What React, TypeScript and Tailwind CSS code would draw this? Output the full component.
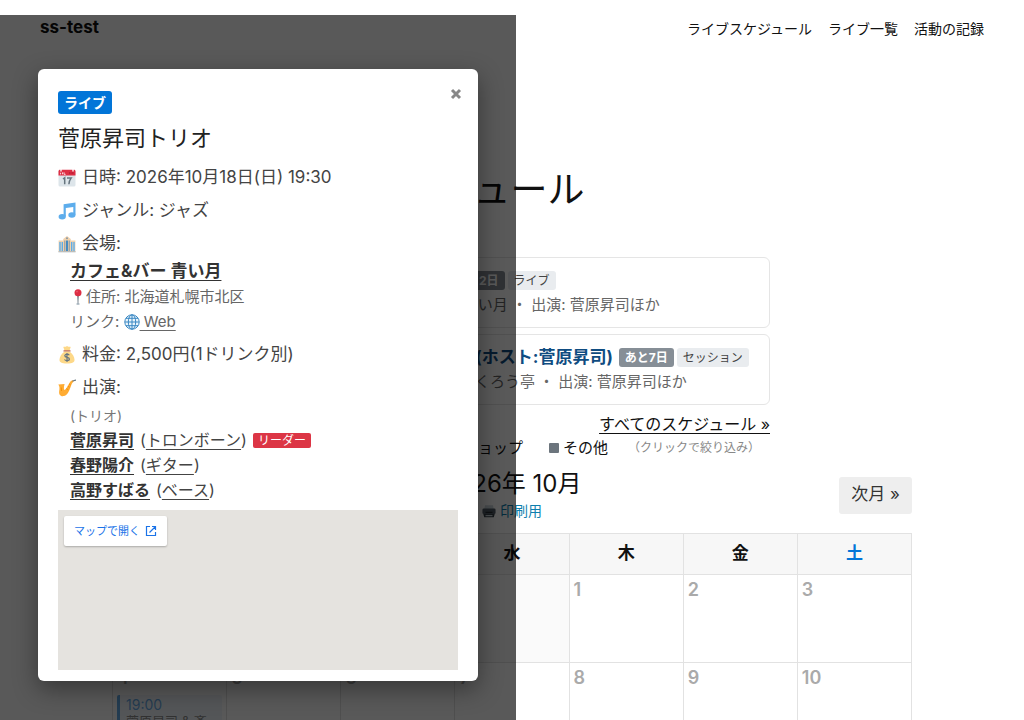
import type { ReactNode } from 'react';

function CalendarIcon() {
  return (
    <svg viewBox="0 0 18 18" className="size-[18px] shrink-0" aria-hidden="true">
      <rect x="0.5" y="1" width="17" height="16.5" rx="1.6" fill="#dde5ea" />
      <path d="M.5 6.6V2.4C.5 1.4 1.2.8 2 .8h14c.9 0 1.5.7 1.5 1.600v4.200z" fill="#dd2e44" />
      <path d="M3 0.300v1.800M15 0.300v1.800" stroke="#fff" strokeWidth="1.300" strokeLinecap="round" />
      <path d="M2.600 5V3.700M2 5.200h.6M4.500 5.300V3.400M6 5.300h1.600M6 3.300v2" stroke="#fff" strokeWidth=".8" />
      <path d="M11 4h5" stroke="#a0152b" strokeWidth="1.200" strokeDasharray="1 .6" />
      <path d="M5 10l1.700-1.300v6.600M9 8.900h4.200c-1.500 2-2.200 4-2.300 6.400" fill="none" stroke="#66757f" strokeWidth="1.500" />
    </svg>
  );
}

function MusicIcon() {
  return (
    <svg viewBox="0 0 18 18" className="size-[18px] shrink-0" aria-hidden="true">
      <path d="M5.600 2.200 17.500.5v12.300h-2.200V5L7.800 6.100v8.400H5.600z" fill="#5dadec" />
      <ellipse cx="4.200" cy="14.700" rx="3.600" ry="2.700" fill="#5dadec" />
      <ellipse cx="13.900" cy="13" rx="3.600" ry="2.700" fill="#5dadec" />
    </svg>
  );
}

function VenueIcon() {
  return (
    <svg viewBox="0 0 18 18" className="size-[18px] shrink-0" aria-hidden="true">
      <path d="M.6 5.500h4.600V4L9 1l3.800 3v1.500h4.600V17H.6z" fill="#f0d2ae" />
      <path d="M2 7v9M4.300 7v9M13.700 7v9M16 7v9" stroke="#55acee" strokeWidth="1.300" />
      <path d="M6.800 5.500V16M11.200 5.500V16" stroke="#8899a6" strokeWidth="1.100" />
      <path d="M9 5.500V16" stroke="#3b88c3" strokeWidth="1.900" />
      <circle cx="9" cy="3.300" r="1" fill="#8899a6" />
      <path d="M.4 16.800h17.200" stroke="#aab4bb" strokeWidth="1" />
    </svg>
  );
}

function MoneyIcon() {
  return (
    <svg viewBox="0 0 18 18" className="size-[18px] shrink-0" aria-hidden="true">
      <path d="M6.500 5.500h5c3.300 2.500 5 5.600 5 8.200 0 2.600-1.800 3.800-7.500 3.800s-7.500-1.200-7.500-3.800c0-2.600 1.700-5.700 5-8.200z" fill="#fdd888" />
      <path d="M5.300 1c1-.8 1.800.2 2.500-.3.800-.5 1.800-.5 2.500 0 .8.500 1.600-.5 2.400.3L11.500 4.500h-5z" fill="#fdd888" />
      <path d="M6 4.900h6" stroke="#bf6952" strokeWidth="1.400" strokeLinecap="round" />
      <path d="M11.300 9.200C10.900 8.500 10 8.200 9 8.200c-1.200 0-2.200.6-2.200 1.600 0 2.300 4.600 1 4.600 3.300 0 1-1.100 1.600-2.400 1.600-1.100 0-2-.4-2.500-1.200M9 7v9" fill="none" stroke="#67757f" strokeWidth="1.200" />
    </svg>
  );
}

function SaxIcon() {
  return (
    <svg viewBox="0 0 18 18" className="size-[18px] shrink-0" aria-hidden="true">
      <path d="M.3 5.500 6.600 4.900C6 6.500 5.800 8 5.900 9.800c0 1.400 1 1.500 1.900.3 1.400-1.800 2.600-4.300 3.800-6.300.9-1.600 2-2.700 3.700-2.500l.3 1.500c-1.500.6-1.900 2.400-2.800 4.700-1.600 4.300-3.300 9-7.200 9.600-3.500.5-4.900-2.100-4.400-5.200.4-2.300.6-4.500-.9-6.400z" fill="#ffac33" />
      <path d="M14.800 2 17.600 1.200" stroke="#66757f" strokeWidth="1.200" strokeLinecap="round" />
      <path d="M8.300 9.700l2 1M9.800 7.300l1.700.9M11.100 5l1.400.8M3.300 8.500l.2 3.500" stroke="#f4900c" strokeWidth="1" />
    </svg>
  );
}

function PinIcon() {
  return (
    <svg viewBox="0 0 16 16" className="size-4 shrink-0" aria-hidden="true">
      <path d="M7.200 6h1.600L8.300 15h-.6z" fill="#66757f" />
      <ellipse cx="8" cy="15" rx="1.800" ry=".7" fill="#99aab5" />
      <circle cx="8" cy="3.700" r="3.500" fill="#dd2e44" />
      <circle cx="7" cy="2.600" r=".9" fill="#ea596e" />
    </svg>
  );
}

function GlobeIcon() {
  return (
    <svg viewBox="0 0 16 16" className="inline-block size-4 align-[-3px]" aria-hidden="true">
      <circle cx="8" cy="8" r="7.200" fill="#e8f4fc" />
      <g fill="none" stroke="#3b88c3" strokeWidth="1">
        <circle cx="8" cy="8" r="7.200" />
        <ellipse cx="8" cy="8" rx="3.700" ry="7.200" />
        <path d="M8 .8v14.400M.8 8h14.400M1.900 4.300h12.200M1.900 11.700h12.200" />
      </g>
    </svg>
  );
}

function PrinterIcon() {
  return (
    <svg viewBox="0 0 16 16" className="size-[14px] shrink-0" aria-hidden="true">
      <path d="M3.500 1.500h9L13.500 6h-11z" fill="#ccd6dd" />
      <rect x=".5" y="5" width="15" height="6.500" rx="1.500" fill="#55606a" />
      <path d="M1.500 11.500h13l-1 3.500h-11z" fill="#39434b" />
      <path d="M4 9.500h8" stroke="#20272c" strokeWidth="1.200" />
      <path d="M4 12.500h8v1.500H4z" fill="#ccd6dd" />
    </svg>
  );
}

function ExternalIcon() {
  return (
    <svg viewBox="0 0 12 12" className="size-3" fill="none" stroke="#1a73e8" strokeWidth="1.200" aria-hidden="true">
      <path d="M5 1.500H1.500v9h9V7M7 1.500h3.500V5M10.500 1.500 4.500 7.500" />
    </svg>
  );
}

function Row({ icon, children }: { icon: ReactNode; children: ReactNode }) {
  return (
    <p className="flex items-center gap-[6px] text-[17px] leading-[25px]">
      {icon}
      <span>{children}</span>
    </p>
  );
}

const performers = [
  { name: '菅原昇司', part: 'トロンボーン', leader: true },
  { name: '春野陽介', part: 'ギター', leader: false },
  { name: '高野すばる', part: 'ベース', leader: false },
];

function EventDialog() {
  return (
    <div className="absolute left-0 top-[15px] flex h-screen w-[516px] max-w-full items-center justify-center bg-black/65">
      <section
        role="dialog"
        aria-labelledby="event-title"
        className="relative w-[440px] rounded-[6px] bg-white px-5 pb-[11px] pt-[22px] text-[#444] shadow-[0_8px_24px_rgba(0,0,0,0.4)]"
      >
        <button type="button" aria-label="閉じる" className="absolute right-4 top-[19px] flex size-3 items-center justify-center">
          <svg viewBox="0 0 12 12" className="size-3" stroke="#888" strokeWidth="3" aria-hidden="true">
            <path d="M2 2l8 8M10 2l-8 8" />
          </svg>
        </button>
        <span className="flex h-[23px] w-fit items-center rounded-[3px] bg-[#0275d8] px-[6px] text-[14px] font-bold text-white">
          ライブ
        </span>
        <h2 id="event-title" className="mt-[9px] text-[22px] leading-[30px] text-[#222]">
          菅原昇司トリオ
        </h2>
        <div className="mt-3 flex flex-col gap-2">
          <Row icon={<CalendarIcon />}>日時: 2026年10月18日(日) 19:30</Row>
          <Row icon={<MusicIcon />}>ジャンル: ジャズ</Row>
          <div>
            <Row icon={<VenueIcon />}>会場:</Row>
            <div className="mt-[3px] pl-3 text-[15px] leading-[25px] text-[#666]">
              <a href="#venue" className="block w-fit text-[17px] font-bold text-[#333] underline underline-offset-3">
                カフェ&amp;バー 青い月
              </a>
              <p className="flex items-center">
                <PinIcon />
                住所: 北海道札幌市北区
              </p>
              <p>
                リンク:{' '}
                <a href="#web" className="underline underline-offset-3">
                  <GlobeIcon /> Web
                </a>
              </p>
            </div>
          </div>
          <Row icon={<MoneyIcon />}>料金: 2,500円(1ドリンク別)</Row>
          <div>
            <Row icon={<SaxIcon />}>出演:</Row>
            <div className="mt-[3px] pl-3 text-[16px] leading-[25px]">
              <p className="text-[14px] leading-[25px] text-[#777]">(トリオ)</p>
              <ul>
                {performers.map((p) => (
                  <li key={p.name} className="flex items-center gap-[6px]">
                    <a href="#performer" className="font-bold text-[#333] underline underline-offset-3">
                      {p.name}
                    </a>
                    <span>
                      (
                      <a href="#part" className="underline underline-offset-3">
                        {p.part}
                      </a>
                      )
                    </span>
                    {p.leader && (
                      <span className="flex h-[15px] items-center rounded-[2px] bg-[#dc3545] px-[5px] text-[12px] text-white">
                        リーダー
                      </span>
                    )}
                  </li>
                ))}
              </ul>
            </div>
          </div>
        </div>
        <div className="mt-[7px] h-40 bg-[#e5e3df] p-[6px]">
          <a
            href="#map"
            className="flex h-[30px] w-fit items-center gap-[5px] rounded-[2px] bg-white px-[10px] text-[11px] text-[#1a73e8] shadow-[0_1px_2px_rgba(0,0,0,0.25)]"
          >
            マップで開く
            <ExternalIcon />
          </a>
        </div>
      </section>
    </div>
  );
}

function Tag({ solid, children }: { solid?: boolean; children: ReactNode }) {
  const base = 'flex h-[19px] shrink-0 items-center rounded-[3px] px-[6px] text-[12px]';
  return (
    <span className={solid ? `${base} bg-[#868e96] font-bold text-white` : `${base} bg-[#e9ecef] text-[#444]`}>
      {children}
    </span>
  );
}

function UpcomingCard({ title, days, kind, detail }: { title: string; days: string; kind: string; detail: string }) {
  return (
    <li className="flex h-[71px] flex-col justify-center rounded-[6px] border border-[#e5e5e5] px-[14px]">
      <div className="flex h-[25px] items-center gap-[3px]">
        <a href="#event" className="mr-[3px] whitespace-nowrap text-[17px] font-bold text-[#0f4c81]">
          {title}
        </a>
        <Tag solid>{days}</Tag>
        <Tag>{kind}</Tag>
      </div>
      <p className="whitespace-nowrap text-[15px] leading-6 text-[#666]">{detail}</p>
    </li>
  );
}

const weekdays = ['日', '月', '火', '水', '木', '金', '土'];
const weeks: (number | null)[][] = [
  [null, null, null, null, 1, 2, 3],
  [4, 5, 6, 7, 8, 9, 10],
];

export default function App() {
  return (
    <div className="relative h-screen overflow-hidden bg-white font-['Inter','Noto_Sans_CJK_JP',sans-serif] text-[#111]">
      <header className="flex h-14 items-center justify-between px-10">
        <a href="#home" className="text-[17px] font-bold">
          ss-test
        </a>
        <nav className="flex gap-4 text-[14px]">
          <a href="#schedule">ライブスケジュール</a>
          <a href="#list">ライブ一覧</a>
          <a href="#records">活動の記録</a>
        </nav>
      </header>

      <main>
        <div className="mx-auto w-[516px] max-w-full pt-[110px]">
          <h1 className="text-[37px] leading-[48px]">ライブスケジュール</h1>
          <ul className="mt-[43px] flex flex-col gap-[6px]">
            <UpcomingCard
              title="菅原昇司トリオ ライブ"
              days="あと2日"
              kind="ライブ"
              detail="10/18(日)19:30 カフェ&バー 青い月 ・ 出演: 菅原昇司ほか"
            />
            <UpcomingCard
              title="ジャズ・ジャムセッション (ホスト:菅原昇司)"
              days="あと7日"
              kind="セッション"
              detail="10/23(金) 19:00 ジャズ喫茶 ふくろう亭 ・ 出演: 菅原昇司ほか"
            />
          </ul>
          <p className="mt-[7px] text-right text-[16px] leading-6">
            <a href="#all" className="underline underline-offset-3">
              すべてのスケジュール »
            </a>
          </p>
        </div>

        <div className="mx-auto w-[800px] max-w-full">
          <div className="flex h-6 items-center justify-center gap-[26px] pr-[60px] text-[15px]">
            {[
              ['bg-[#0275d8]', 'ライブ'],
              ['bg-[#28a745]', 'セッション'],
              ['bg-[#f0ad4e]', 'ワークショップ'],
              ['bg-[#6c757d]', 'その他'],
            ].map(([color, label]) => (
              <button type="button" key={label} className="flex items-center gap-1">
                <span className={`size-[10px] rounded-[1px] ${color}`} />
                {label}
              </button>
            ))}
            <span className="-ml-[6px] text-[12px] text-[#888]">（クリックで絞り込み）</span>
          </div>

          <div className="mt-2 grid grid-cols-[1fr_auto_1fr] items-center">
            <button type="button" className="h-[37px] w-fit rounded-[3px] bg-[#eee] px-3 text-[17px] text-[#333]">
              « 前月
            </button>
            <div className="flex flex-col items-center">
              <h2 className="text-[24px] leading-8">2026年 10月</h2>
              <a href="#print" className="flex items-center gap-[4px] text-[14px] leading-[22px] text-[#0e7fae]">
                <PrinterIcon />
                印刷用
              </a>
            </div>
            <button
              type="button"
              className="h-[37px] w-fit justify-self-end rounded-[3px] bg-[#eee] px-3 text-[17px] text-[#333]"
            >
              次月 »
            </button>
          </div>

          <table className="mt-[11px] w-full table-fixed border-collapse">
            <thead>
              <tr className="h-[41px] bg-[#f7f7f7] text-[17px]">
                {weekdays.map((d) => (
                  <th
                    key={d}
                    scope="col"
                    className={`border border-[#e2e2e2] ${d === '土' ? 'text-[#0275d8]' : d === '日' ? 'text-[#d9534f]' : ''}`}
                  >
                    {d}
                  </th>
                ))}
              </tr>
            </thead>
            <tbody>
              {weeks.map((week, w) => (
                <tr key={w} className="h-[88px]">
                  {week.map((day, i) => (
                    <td key={i} className={`border border-[#e2e2e2] p-1 align-top ${day ? '' : 'bg-[#fafafa]'}`}>
                      {day && <div className="text-[18px] font-semibold leading-[22px] text-[#aaa]">{day}</div>}
                      {day === 4 && (
                        <a
                          href="#event"
                          className="mt-[6px] block overflow-hidden whitespace-nowrap rounded-[2px] border-l-3 border-[#0275d8] bg-[#e9f2fb] px-[6px] pt-[2px] text-[13px] leading-4 text-[#444] opacity-60"
                        >
                          <span className="block text-[14px] text-[#0275d8]">19:00</span>
                          菅原昇司 &amp; 斉
                        </a>
                      )}
                    </td>
                  ))}
                </tr>
              ))}
            </tbody>
          </table>
        </div>
      </main>

      <EventDialog />
    </div>
  );
}
